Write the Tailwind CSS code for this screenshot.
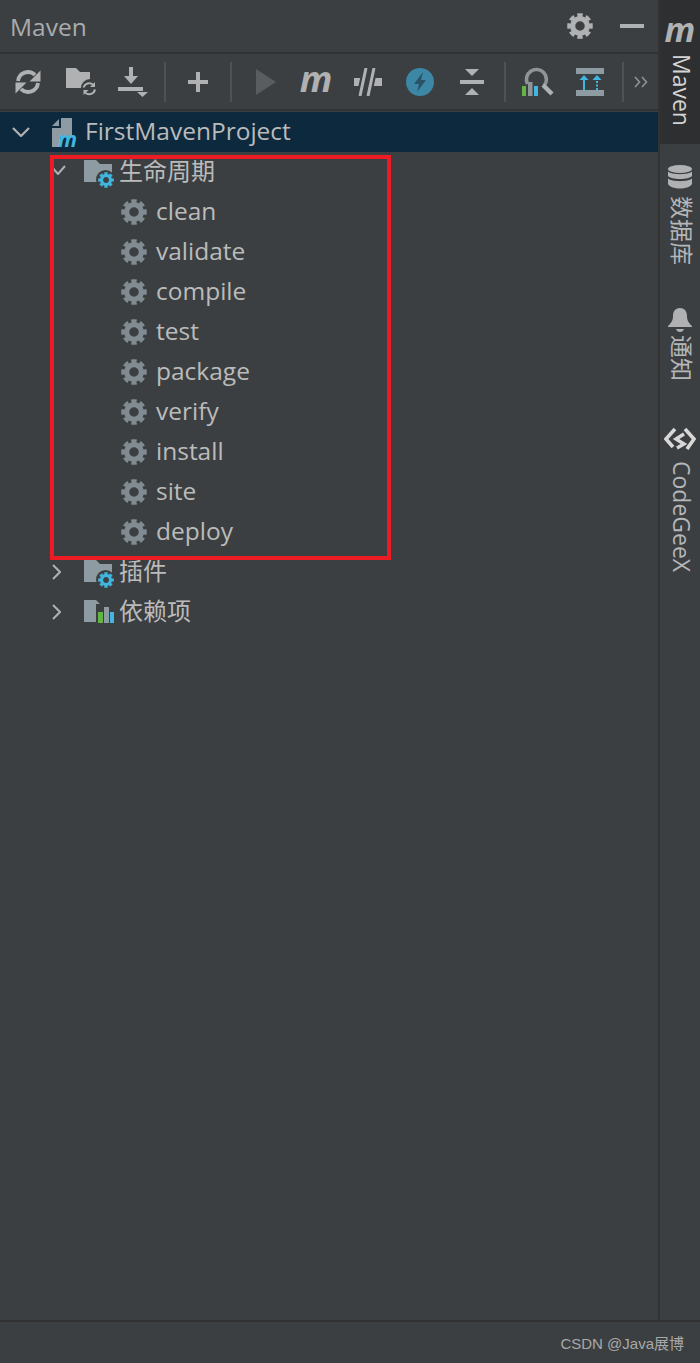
<!DOCTYPE html>
<html>
<head>
<meta charset="utf-8">
<script src="https://cdn.jsdelivr.net/npm/@tailwindcss/browser@4"></script>
</head>
<body class="bg-[#3c3f41]">
<svg class="hidden" width="0" height="0">
  <symbol id="gear" viewBox="0 0 24 24">
    <circle cx="12" cy="12" r="6.8" fill="none" stroke="currentColor" stroke-width="4.8"/>
    <circle cx="12" cy="12" r="10.1" fill="none" stroke="currentColor" stroke-width="3.4" pathLength="80" stroke-dasharray="6.2 3.8" stroke-dashoffset="3.1"/>
  </symbol>
  <symbol id="folder" viewBox="0 0 28 22">
    <path d="M0 0H12L16 4H28V22H0Z" fill="currentColor"/>
  </symbol>
</svg>
<div class="relative flex flex-col w-[700px] h-[1363px] overflow-hidden font-['Open_Sans','Noto_Sans_CJK_SC',sans-serif] text-[#bbbbbb]">
  <div class="flex flex-1 min-h-0">
    <!-- main panel -->
    <div class="w-[658px] flex flex-col">
      <div class="h-[52px] flex items-center justify-between pl-[10px] pr-[14px]">
        <span class="text-[24.5px] leading-none text-[#a9acae] mt-[2px]">Maven</span>
        <div class="flex items-center gap-[27px]">
          <svg class="w-[26px] h-[26px] text-[#afb1b3]"><use href="#gear"/></svg>
          <div class="w-[24px] h-[4px] bg-[#afb1b3]"></div>
        </div>
      </div>
      <div class="h-[59px] border-y-2 border-[#323232] flex items-center pl-[3px]">
        <div class="w-[52px] flex justify-center -ml-[1px] mr-[1px]">
          <svg width="26" height="26" viewBox="0 0 26 26" fill="none" stroke="#afb1b3" stroke-width="3.8">
            <path d="M3 12A10 10 0 0 1 20 6"/><path d="M23 14A10 10 0 0 1 6 20"/>
            <path d="M25.500 1.500V12.500H14.500Z" fill="#afb1b3" stroke="none"/><path d="M0.500 24.500V13.500H11.500Z" fill="#afb1b3" stroke="none"/>
          </svg>
        </div>
        <div class="w-[52px] flex justify-center">
          <svg width="30" height="28" viewBox="0 0 30 28">
            <path d="M0 0H10L14 4H24V11A9 9 0 0 0 15 20H0Z" fill="#afb1b3"/>
            <g fill="none" stroke="#afb1b3" stroke-width="2">
              <path d="M17.500 19.500A6 6 0 0 1 27 16.500"/><path d="M29 21.500A6 6 0 0 1 19.500 25"/>
            </g>
            <path d="M29 14V19H24Z" fill="#afb1b3"/><path d="M17.500 27V22H22.500Z" fill="#afb1b3"/>
          </svg>
        </div>
        <div class="w-[52px] flex justify-center">
          <svg width="30" height="30" viewBox="0 0 30 30" fill="#afb1b3">
            <path d="M11 0H15V9H20L13 17L6 9H11Z"/><rect x="0" y="20" width="25" height="4"/><path d="M19 25H30L24.5 30Z"/>
          </svg>
        </div>
        <div class="w-[2px] h-[40px] bg-[#515151] ml-[5px] mr-[6px]"></div>
        <div class="w-[52px] flex justify-center">
          <svg width="20" height="20" viewBox="0 0 20 20" fill="#afb1b3"><rect x="8" y="0" width="4" height="20"/><rect x="0" y="8" width="20" height="4"/></svg>
        </div>
        <div class="w-[2px] h-[40px] bg-[#515151] ml-[6px] mr-[6px]"></div>
        <div class="w-[52px] flex justify-center">
          <svg class="ml-[4px]" width="20" height="26" viewBox="0 0 20 26"><path d="M0 0L20 13L0 26Z" fill="#5a5d5f"/></svg>
        </div>
        <div class="w-[52px] flex justify-center h-[36px] items-center">
          <span class="font-bold italic text-[36px] leading-none text-[#afb1b3] -translate-y-[3px]">m</span>
        </div>
        <div class="w-[52px] flex justify-center">
          <svg width="28" height="28" viewBox="0 0 28 28">
            <path d="M0 10H28V18H0Z" fill="#afb1b3"/>
            <path d="M16 0L10 28" stroke="#3c3f41" stroke-width="15" fill="none"/>
            <path d="M12 0L6 28M20 0L14 28" stroke="#afb1b3" stroke-width="3" fill="none"/>
          </svg>
        </div>
        <div class="w-[52px] flex justify-center">
          <svg width="28" height="28" viewBox="0 0 28 28">
            <circle cx="14" cy="14" r="14" fill="#3d87a6"/>
            <path d="M17 4L8 16H13L11 24L20 12H15Z" fill="#2b5368"/>
          </svg>
        </div>
        <div class="w-[52px] flex justify-center">
          <svg width="24" height="26" viewBox="0 0 24 26" fill="#afb1b3">
            <path d="M5 0H19L12 7Z"/><rect x="0" y="11" width="24" height="4"/><path d="M5 26H19L12 19Z"/>
          </svg>
        </div>
        <div class="w-[2px] h-[40px] bg-[#515151] ml-[6px] mr-[6px]"></div>
        <div class="w-[52px] flex justify-center">
          <svg width="32" height="30" viewBox="0 0 32 30">
            <path d="M5.500 17A10 10 0 1 1 22 19" fill="none" stroke="#8f9498" stroke-width="3.6"/>
            <path d="M21 18L30 27" stroke="#afb1b3" stroke-width="4.400"/>
            <rect x="0" y="19" width="4" height="10" fill="#62b543"/>
            <rect x="6" y="15" width="4.500" height="14" fill="#8f9498"/>
            <rect x="12" y="19" width="4" height="10" fill="#40b6e0"/>
          </svg>
        </div>
        <div class="w-[52px] flex justify-center">
          <svg width="28" height="28" viewBox="0 0 28 28">
            <rect width="28" height="6" fill="#8f9ba2"/><rect y="22" width="28" height="6" fill="#8f9ba2"/>
            <path d="M8 22V11" stroke="#40b6e0" stroke-width="2"/><path d="M3.500 12L8 7L12.500 12Z" fill="#40b6e0"/>
            <path d="M21 22V11" stroke="#40b6e0" stroke-width="2" stroke-dasharray="2 1.5"/><path d="M16.500 12L21 7L25.500 12Z" fill="#40b6e0"/>
          </svg>
        </div>
        <div class="w-[2px] h-[40px] bg-[#515151] ml-[6px]"></div>
        <div class="ml-[10px]">
          <svg width="14" height="12" viewBox="0 0 14 12" fill="none" stroke="#8f9397" stroke-width="1.600"><path d="M1 1L5.500 6L1 11M8 1L12.500 6L8 11"/></svg>
        </div>
      </div>
      <!-- tree -->
      <div class="mt-[1px] text-[24.5px] leading-none">
        <div class="h-10 bg-[#0d293e] flex items-center pl-[12px]">
          <svg class="w-[18px] h-[10px] mr-[22px]" viewBox="0 0 18 10" fill="none" stroke="#afb1b3" stroke-width="2.200"><path d="M1 1L9 9L17 1"/></svg>
          <div class="relative w-[30px] h-[30px] mr-[3px]">
            <svg width="20" height="29" viewBox="0 0 20 29" class="absolute left-0 top-[1px]"><path d="M9 0H20V19H8V29H0V10H9Z" fill="#8f9ba2"/><path d="M0 8L7 1V8Z" fill="#8f9ba2"/></svg>
            <span class="absolute left-[6px] top-[12px] font-bold italic text-[21px] leading-[21px] text-[#40b6e0]">m</span>
          </div>
          <span class="-mt-[1px]">FirstMavenProject</span>
        </div>
        <div class="h-10 flex items-center pl-[50px] text-[24px]">
          <svg class="w-[16px] h-[10px] mr-[18px] -mt-[4px]" viewBox="0 0 16 10" fill="none" stroke="#afb1b3" stroke-width="2"><path d="M1 1L8 9L15 1"/></svg>
          <div class="relative w-[30px] h-[28px] mr-[5px]">
            <svg class="absolute left-0 top-[2px] w-[28px] h-[22px] text-[#8f9ba2]"><use href="#folder"/></svg>
            <span class="absolute left-[12px] top-[12px] w-[19px] h-[19px] rounded-full bg-[#3c3f41] flex items-center justify-center"><svg class="w-[16px] h-[16px] text-[#40b6e0]"><use href="#gear"/></svg></span>
          </div>
          <span class="-mt-[2px]">生命周期</span>
        </div>
        <div class="flex flex-col pl-[121px]">
          <div class="h-10 flex items-center gap-[9px]"><svg class="w-[26px] h-[26px] text-[#808b92]"><use href="#gear"/></svg><span class="-mt-[2px]">clean</span></div>
          <div class="h-10 flex items-center gap-[9px]"><svg class="w-[26px] h-[26px] text-[#808b92]"><use href="#gear"/></svg><span class="-mt-[2px]">validate</span></div>
          <div class="h-10 flex items-center gap-[9px]"><svg class="w-[26px] h-[26px] text-[#808b92]"><use href="#gear"/></svg><span class="-mt-[2px]">compile</span></div>
          <div class="h-10 flex items-center gap-[9px]"><svg class="w-[26px] h-[26px] text-[#808b92]"><use href="#gear"/></svg><span class="-mt-[2px]">test</span></div>
          <div class="h-10 flex items-center gap-[9px]"><svg class="w-[26px] h-[26px] text-[#808b92]"><use href="#gear"/></svg><span class="-mt-[2px]">package</span></div>
          <div class="h-10 flex items-center gap-[9px]"><svg class="w-[26px] h-[26px] text-[#808b92]"><use href="#gear"/></svg><span class="-mt-[2px]">verify</span></div>
          <div class="h-10 flex items-center gap-[9px]"><svg class="w-[26px] h-[26px] text-[#808b92]"><use href="#gear"/></svg><span class="-mt-[2px]">install</span></div>
          <div class="h-10 flex items-center gap-[9px]"><svg class="w-[26px] h-[26px] text-[#808b92]"><use href="#gear"/></svg><span class="-mt-[2px]">site</span></div>
          <div class="h-10 flex items-center gap-[9px]"><svg class="w-[26px] h-[26px] text-[#808b92]"><use href="#gear"/></svg><span class="-mt-[2px]">deploy</span></div>
        </div>
        <div class="h-10 flex items-center pl-[52px] text-[24px]">
          <svg class="w-[9px] h-[16px] mr-[23px]" viewBox="0 0 9 16" fill="none" stroke="#afb1b3" stroke-width="2"><path d="M1 1L8 8L1 15"/></svg>
          <div class="relative w-[30px] h-[28px] mr-[5px]">
            <svg class="absolute left-0 top-[2px] w-[28px] h-[22px] text-[#8f9ba2]"><use href="#folder"/></svg>
            <span class="absolute left-[12px] top-[12px] w-[19px] h-[19px] rounded-full bg-[#3c3f41] flex items-center justify-center"><svg class="w-[16px] h-[16px] text-[#40b6e0]"><use href="#gear"/></svg></span>
          </div>
          <span class="-mt-[2px]">插件</span>
        </div>
        <div class="h-10 flex items-center pl-[52px] text-[24px]">
          <svg class="w-[9px] h-[16px] mr-[23px]" viewBox="0 0 9 16" fill="none" stroke="#afb1b3" stroke-width="2"><path d="M1 1L8 8L1 15"/></svg>
          <div class="relative w-[30px] h-[28px] mr-[5px]">
            <svg class="absolute left-0 top-[2px] w-[28px] h-[22px] text-[#8f9ba2]"><use href="#folder"/></svg>
            <svg class="absolute left-[12px] top-[6px]" width="18" height="19" viewBox="0 0 18 19">
              <rect width="18" height="19" fill="#3c3f41"/>
              <rect x="2" y="8" width="5" height="11" fill="#62b543"/>
              <rect x="8" y="3" width="5" height="16" fill="#8f9ba2"/>
              <rect x="14" y="8" width="4" height="11" fill="#40b6e0"/>
            </svg>
          </div>
          <span class="-mt-[2px]">依赖项</span>
        </div>
      </div>
    </div>
    <!-- side strip -->
    <div class="w-[42px] border-l-2 border-[#323232] flex flex-col items-center text-[23px] leading-none">
      <div class="w-full h-[144px] bg-[#2e2f31] flex flex-col items-center text-[#d4d4d4]">
        <span class="font-bold italic text-[34px] leading-none text-[#afb1b3] mt-[12px] h-[42px]">m</span>
        <span class="translate-x-[1px] [writing-mode:vertical-rl] [text-orientation:sideways]">Maven</span>
      </div>
      <svg class="mt-[21px]" width="24" height="24" viewBox="0 0 24 24" fill="#afb1b3">
        <ellipse cx="12" cy="4" rx="12" ry="4"/>
        <path d="M0 6.500C3 10 21 10 24 6.500V11C21 15 3 15 0 11Z"/><path d="M0 13.500C3 17 21 17 24 13.500V19C21 25 3 25 0 19Z"/>
      </svg>
      <span class="mt-[7px] translate-x-[1px] [writing-mode:vertical-rl] [text-orientation:sideways] text-[#b4b6b8]">数据库</span>
      <svg class="mt-[43px]" width="24" height="24" viewBox="0 0 24 24" fill="#afb1b3">
        <path d="M12 0C17 0 19 4 19 8C19 13 21 15 24 18V19H0V18C3 15 5 13 5 8C5 4 7 0 12 0Z"/><path d="M8 21H16C15 25 9 25 8 21Z"/>
      </svg>
      <span class="mt-[3px] translate-x-[1px] [writing-mode:vertical-rl] [text-orientation:sideways] text-[#b4b6b8]">通知</span>
      <svg class="mt-[46px]" width="32" height="24" viewBox="0 0 32 24" fill="none" stroke="#d8d8d8" stroke-width="3.600">
        <path d="M11 2L2 12L9 20"/><path d="M21 2L30 12L23 22"/><path d="M20 7L12 12L20 17L13 21" stroke-width="3.400"/>
      </svg>
      <span class="mt-[10px] translate-x-[1px] [writing-mode:vertical-rl] [text-orientation:sideways] text-[#b4b6b8]">CodeGeeX</span>
    </div>
  </div>
  <div class="h-[43px] border-t-2 border-[#323232] flex items-center justify-end pr-[16px] pt-[3px]">
    <span class="font-['Liberation_Sans','Noto_Sans_CJK_SC',sans-serif] text-[15px] text-[#a8a8a8]">CSDN @Java展博</span>
  </div>
  <!-- annotation -->
  <div class="absolute left-[50px] top-[155px] w-[341px] h-[405px] border-[4px] border-[#ed1c24]"></div>
</div>
</body>
</html>
